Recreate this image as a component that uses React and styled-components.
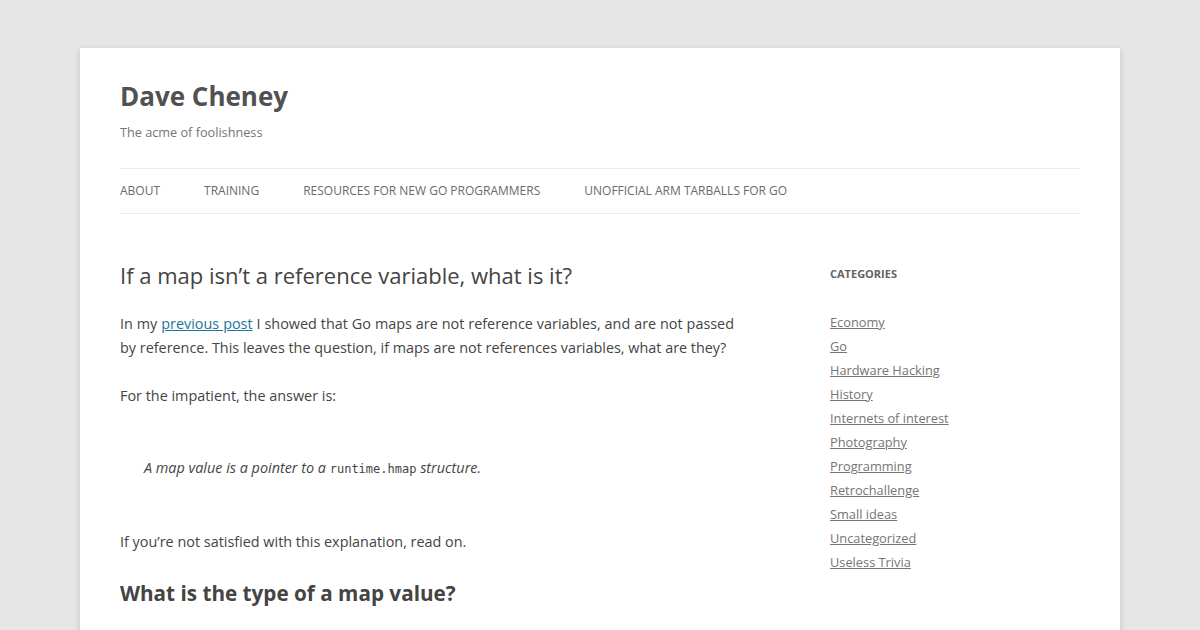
import React from 'react'
import styled, { createGlobalStyle } from 'styled-components'

const GlobalStyle = createGlobalStyle`
	html, body {
		margin: 0;
		padding: 0;
		background-color: #e6e6e6;
	}
	body {
		font-family: "Open Sans", Helvetica, Arial, sans-serif;
		color: #444444;
		text-rendering: optimizeLegibility;
	}
`

const Page = styled.div`
	width: 960px;
	margin: 48px auto 0;
	padding: 0 40px;
	background-color: #ffffff;
	box-shadow: 0 2px 6px rgba(100, 100, 100, 0.3);
	min-height: 700px;
`

const Header = styled.header`
	padding: 24px 0 0;
`

const SiteTitle = styled.h1`
	margin: 0;
	font-size: 26px;
	line-height: 48px;
	font-weight: bold;
	color: #515151;
`

const Tagline = styled.h2`
	margin: 0;
	font-size: 12.7px;
	line-height: 24px;
	font-weight: normal;
	color: #757575;
`

const Nav = styled.nav`
	margin-top: 24px;
	border-top: 1px solid #ededed;
	border-bottom: 1px solid #ededed;
	display: flex;
	gap: 44px;
`

const NavItem = styled.a`
	font-size: 12px;
	line-height: 44px;
	text-transform: uppercase;
	color: #6a6a6a;
	text-decoration: none;
`

const Content = styled.div`
	display: flex;
	justify-content: space-between;
	margin-top: 24px;
`

const Main = styled.main`
	width: 614px;
`

const EntryTitle = styled.h1`
	margin: 25px 0 25px;
	font-size: 22px;
	line-height: 24px;
	font-weight: normal;
	color: #444444;
`

const Para = styled.p`
	margin: 0 0 24px;
	font-size: 14.4px;
	line-height: 24px;
	text-align: ${props => (props.justify ? 'justify' : 'left')};
`

const Link = styled.a`
	color: #21759b;
	text-decoration: underline;
`

const Quote = styled.blockquote`
	margin: 0 0 25px;
	padding: 24px;
	font-style: italic;
	font-size: 14.4px;
	line-height: 24px;

	p {
		margin: 0;
	}
`

const Code = styled.code`
	font-family: "DejaVu Sans Mono", "Liberation Mono", monospace;
	font-style: normal;
	font-size: 12px;
`

const SubHeading = styled.h2`
	margin: 0;
	font-size: 20.7px;
	line-height: 31px;
	font-weight: bold;
	color: #444444;
`

const Sidebar = styled.aside`
	width: 250px;
	padding-top: 24px;
`

const WidgetTitle = styled.h3`
	margin: 0 0 24px;
	font-size: 11px;
	line-height: 24px;
	font-weight: bold;
	text-transform: uppercase;
	color: #636363;
`

const CatList = styled.ul`
	list-style: none;
	margin: 0;
	padding: 0;
`

const CatItem = styled.li`
	font-size: 12.8px;
	line-height: 24px;

	a {
		color: #757575;
		text-decoration: underline;
	}
`

const categories = [
	'Economy',
	'Go',
	'Hardware Hacking',
	'History',
	'Internets of interest',
	'Photography',
	'Programming',
	'Retrochallenge',
	'Small ideas',
	'Uncategorized',
	'Useless Trivia'
]

const navItems = ['About', 'Training', 'Resources for new Go programmers', 'Unofficial ARM tarballs for Go']

const App = () => {
	return (
		<React.Fragment>
			<GlobalStyle />
			<Page>
				<Header>
					<SiteTitle>Dave Cheney</SiteTitle>
					<Tagline>The acme of foolishness</Tagline>
					<Nav>
						{navItems.map(item => (
							<NavItem key={item} href="#">{item}</NavItem>
						))}
					</Nav>
				</Header>
				<Content>
					<Main>
						<EntryTitle>If a map isn’t a reference variable, what is it?</EntryTitle>
						<Para justify>
							In my <Link href="#">previous post</Link> I showed that Go maps are not reference variables, and are not passed by{'\u00a0'}reference. This leaves the question, if maps are not references variables, what are they?
						</Para>
						<Para>For the impatient, the answer is:</Para>
						<Quote>
							<p>A map value is a pointer to a <Code>runtime.hmap</Code> structure.</p>
						</Quote>
						<Para>If you’re not satisfied with this explanation, read on.</Para>
						<SubHeading>What is the type of a map value?</SubHeading>
					</Main>
					<Sidebar>
						<WidgetTitle>Categories</WidgetTitle>
						<CatList>
							{categories.map(cat => (
								<CatItem key={cat}>
									<a href="#">{cat}</a>
								</CatItem>
							))}
						</CatList>
					</Sidebar>
				</Content>
			</Page>
		</React.Fragment>
	)
}

export default App
